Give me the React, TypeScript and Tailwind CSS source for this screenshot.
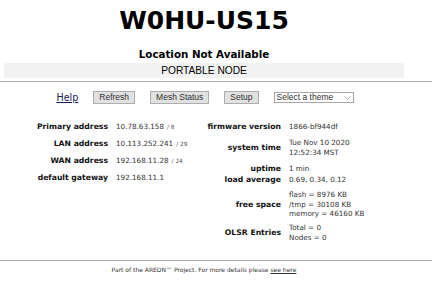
export default function App() {
  const left = [
    { label: "Primary address", value: "10.78.63.158", mask: "/ 8" },
    { label: "LAN address", value: "10.113.252.241", mask: "/ 29" },
    { label: "WAN address", value: "192.168.11.28", mask: "/ 24" },
    { label: "default gateway", value: "192.168.11.1", mask: "" },
  ];

  return (
    <div className="w-[432px] h-[299px] overflow-hidden bg-white text-[#222] font-['DejaVu_Sans',Verdana,sans-serif]">
      {/* Header */}
      <div className="w-[400px] ml-[4px] flex flex-col items-center">
        <h1 className="mt-[6px] text-[25px] leading-[30px] font-bold text-black">W0HU-US15</h1>
        <div className="mt-[12px] text-[10.3px] leading-[13px] font-bold text-black">Location Not Available</div>
        <div className="mt-[2px] w-full h-[15px] bg-[#f2f2f2] flex items-center justify-center font-['Liberation_Sans',Arial,sans-serif] text-[10.2px] text-black">
          PORTABLE NODE
        </div>
      </div>
      <div className="mt-[3px] border-t border-[#a8a8a8]" />

      {/* Nav */}
      <div className="mt-[9px] w-[410px] flex items-center justify-center gap-[15px] font-['Liberation_Sans',Arial,sans-serif]">
        <a className="text-[9.6px] leading-[12px] text-[#1c1c50] underline font-['DejaVu_Sans',Verdana,sans-serif]">Help</a>
        <button className="h-[13px] px-[5px] bg-[#e1e1e1] border border-[#adadad] text-[8.5px] leading-none text-[#333]">Refresh</button>
        <button className="h-[13px] px-[5px] bg-[#e1e1e1] border border-[#adadad] text-[8.5px] leading-none text-[#333]">Mesh Status</button>
        <button className="h-[13px] px-[5px] bg-[#e1e1e1] border border-[#adadad] text-[8.5px] leading-none text-[#333]">Setup</button>
        <div className="w-[80px] h-[11px] border border-[#a6a6a6] bg-white flex items-center justify-between pl-[2px] pr-[2px] text-[8.5px] leading-none text-[#333]">
          <span>Select a theme</span>
          <svg width="7" height="4" viewBox="0 0 7 4" fill="none" stroke="#999" strokeWidth="0.7">
            <path d="M0.3 0.3 L3.5 3.5 L6.7 0.3" />
          </svg>
        </div>
      </div>

      {/* Status tables */}
      <div className="mt-[18px] flex">
        <div className="w-[190px] grid grid-cols-[108px_auto] gap-x-[8px] gap-y-[6.5px] content-start">
          {left.map((r) => (
            <div key={r.label} className="contents">
              <div className="text-right font-bold text-[7.7px] leading-[9.5px] text-[#111]">{r.label}</div>
              <div className="text-[7.2px] leading-[9.5px] text-[#333] whitespace-nowrap">
                {r.value}
                {r.mask && <span className="ml-[3px] text-[5.8px] text-[#555]">{r.mask}</span>}
              </div>
            </div>
          ))}
        </div>

        <div className="flex flex-col">
          <Row label="firmware version" lines={["1866-bf944df"]} />
          <Row className="mt-[6.75px]" label="system time" lines={["Tue Nov 10 2020", "12:52:34 MST"]} />
          <Row className="mt-[7px]" label="uptime" lines={["1 min"]} />
          <Row className="mt-[1.5px]" label="load average" lines={["0.69, 0.34, 0.12"]} />
          <Row className="mt-[5.5px]" label="free space" lines={["flash = 8976 KB", "/tmp = 30108 KB", "memory = 46160 KB"]} />
          <Row className="mt-[4.5px]" label="OLSR Entries" lines={["Total = 0", "Nodes = 0"]} />
        </div>
      </div>

      {/* Footer */}
      <div className="mt-[18px] border-t border-[#a8a8a8]" />
      <div className="mt-[5px] w-[408px] text-center text-[6px] leading-[8px] text-[#333]">
        Part of the AREDN™ Project. For more details please <a className="underline">see here</a>
      </div>
    </div>
  );
}

function Row({ label, lines, className = "" }: { label: string; lines: string[]; className?: string }) {
  return (
    <div className={`flex items-center ${className}`}>
      <div className="w-[91px] text-right font-bold text-[7.7px] leading-[9.5px] text-[#111] whitespace-nowrap">{label}</div>
      <div className="ml-[8px] flex flex-col text-[7.2px] leading-[9.5px] text-[#333] whitespace-nowrap">
        {lines.map((l) => (
          <span key={l}>{l}</span>
        ))}
      </div>
    </div>
  );
}
